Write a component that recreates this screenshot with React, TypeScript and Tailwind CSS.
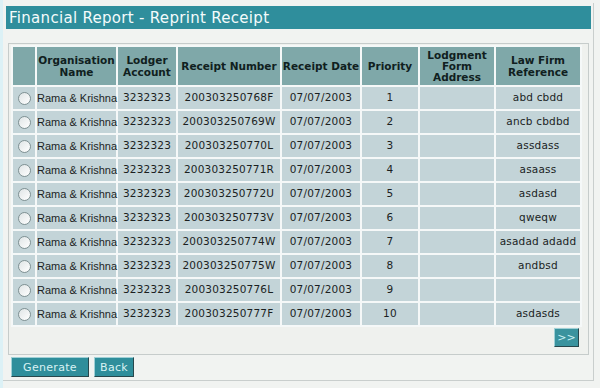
const rows = [
  { n: "200303250768F", p: 1, ref: "abd cbdd" },
  { n: "200303250769W", p: 2, ref: "ancb cbdbd" },
  { n: "200303250770L", p: 3, ref: "assdass" },
  { n: "200303250771R", p: 4, ref: "asaass" },
  { n: "200303250772U", p: 5, ref: "asdasd" },
  { n: "200303250773V", p: 6, ref: "qweqw" },
  { n: "200303250774W", p: 7, ref: "asadad adadd" },
  { n: "200303250775W", p: 8, ref: "andbsd" },
  { n: "200303250776L", p: 9, ref: "" },
  { n: "200303250777F", p: 10, ref: "asdasds" },
];

function Radio() {
  return (
    <span className="mx-auto block h-[13px] w-[13px] rounded-full border border-[#7f9193] bg-gradient-to-br from-[#dfe5e6] to-white" />
  );
}

function Btn({ label, w }: { label: string; w: string }) {
  return (
    <button
      className={`${w} h-[20px] border border-t-[#9fd0d6] border-l-[#9fd0d6] border-b-[#27474c] border-r-[#27474c] bg-[#2f8e9b] text-[11px] leading-none tracking-[0.3px] text-[#d8f2f3]`}
    >
      {label}
    </button>
  );
}

export default function App() {
  return (
    <div className="h-[388px] w-[600px] overflow-hidden border-l-[3px] border-[#dcf1f6] bg-[#f1f3f1] font-['DejaVu_Sans',sans-serif] text-[#1b1f1f]">
      <div className="mt-[3px] h-[378px] w-[591px] border-b border-r border-[#c9cecd] pl-[3px] pt-[3px]">
        <div className="flex h-[23px] w-[585px] items-center bg-[#2f8e9c] pl-[3px] pt-[1px] text-[15px] tracking-[0.3px] text-[#f4fbfb]">
          Financial Report - Reprint Receipt
        </div>

        <div className="ml-[2px] mt-[14px] w-[581px] border border-[#c6cccb] bg-[#eff1ee] pb-[7px]">
          <table className="ml-[2px] mt-[1px] w-[571px] table-fixed border-separate border-spacing-[2px] bg-[#f5f8f8]">
            <colgroup>
              <col className="w-[22px]" />
              <col className="w-[79px]" />
              <col className="w-[58px]" />
              <col className="w-[102px]" />
              <col className="w-[78px]" />
              <col className="w-[56px]" />
              <col className="w-[74px]" />
              <col className="w-[84px]" />
            </colgroup>
            <thead>
              <tr className="h-[38px] bg-[#7fa8a9] text-center text-[10.5px] font-bold leading-[12px] text-[#102020]">
                <th className="p-0"></th>
                <th className="whitespace-nowrap p-0">Organisation<br />Name</th>
                <th className="whitespace-nowrap p-0">Lodger<br />Account</th>
                <th className="whitespace-nowrap p-0">Receipt Number</th>
                <th className="whitespace-nowrap p-0">Receipt Date</th>
                <th className="whitespace-nowrap p-0">Priority</th>
                <th className="whitespace-nowrap p-0 leading-[11px]">Lodgment<br />Form<br />Address</th>
                <th className="whitespace-nowrap p-0">Law Firm<br />Reference</th>
              </tr>
            </thead>
            <tbody>
              {rows.map((r) => (
                <tr key={r.n} className="h-[22px] bg-[#c3d4d8] text-center text-[10.5px] tracking-[0.2px]">
                  <td className="p-0"><Radio /></td>
                  <td className="whitespace-nowrap p-0 text-left font-['Liberation_Sans',sans-serif] text-[11px] tracking-normal">Rama &amp; Krishna</td>
                  <td className="p-0">3232323</td>
                  <td className="p-0">{r.n}</td>
                  <td className="p-0">07/07/2003</td>
                  <td className="p-0">{r.p}</td>
                  <td className="p-0"></td>
                  <td className="whitespace-nowrap p-0">{r.ref}</td>
                </tr>
              ))}
            </tbody>
          </table>
          <div className="mr-[9px] mt-[1px] flex justify-end">
            <button className="h-[19px] w-[25px] border border-t-[#9fd0d6] border-l-[#9fd0d6] border-b-[#27474c] border-r-[#27474c] bg-[#3a939e] text-[11px] leading-none text-[#c9f1f4]">
              &gt;&gt;
            </button>
          </div>
        </div>

        <div className="ml-[5px] mt-[2px] flex gap-[5px]">
          <Btn label="Generate" w="w-[78px]" />
          <Btn label="Back" w="w-[40px]" />
        </div>
      </div>
    </div>
  );
}
